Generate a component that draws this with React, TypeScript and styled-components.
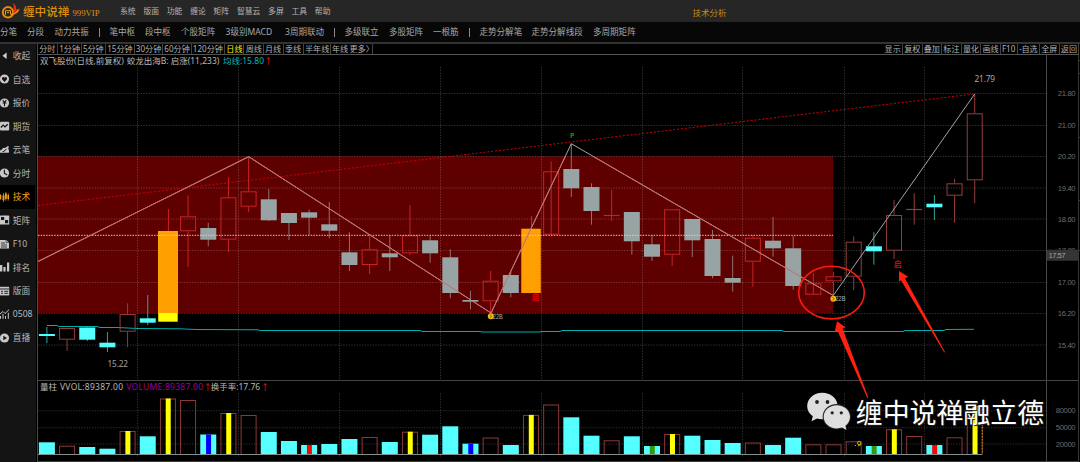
import React from "react";
import styled, { createGlobalStyle } from "styled-components";

const Global = createGlobalStyle`
  * { box-sizing: border-box; }
  body { margin: 0; background: #000; overflow: hidden; }
  svg { display: block; }
`;

const sans = `"Noto Sans", "Noto Sans CJK SC", sans-serif`;

const Page = styled.div`
  position: relative;
  display: flex;
  flex-direction: column;
  width: 1080px;
  height: 462px;
  background: #000;
  color: #b4b4b4;
  font-family: ${sans};
  font-size: 8.4px;
  white-space: nowrap;
  overflow: hidden;
`;

const TitleBar = styled.header`
  display: flex;
  align-items: center;
  height: 22px;
  flex: none;
  background: #262626;
`;

const Brand = styled.div`
  display: flex;
  align-items: center;
  width: 120px;
  color: #dc920e;
`;

const BrandName = styled.span`
  width: 49.5px;
  margin-left: 1px;
  font: 500 11.6px/20px "Noto Sans CJK SC", sans-serif;
`;

const BrandTier = styled.span`
  padding-top: 3px;
  font: 8.7px/18px "Liberation Serif", serif;
`;

const Menu = styled.nav`
  display: flex;
  gap: 7.7px;
  width: 572.5px;
  font-size: 7.85px;
  line-height: 22px;
`;

const PageName = styled.span`
  color: #c98a10;
  font-size: 8.5px;
  padding-top: 1px;
`;

const ToolBar = styled.div`
  display: flex;
  flex: none;
  height: 20px;
  background: #070707;
  font-size: 8.55px;
  line-height: 20px;
  color: #a8a8a8;
`;

const Tool = styled.span<{ $w: number }>`
  width: ${(p) => p.$w}px;
  flex: none;
`;

const ToolDivider = styled.i<{ $w: number }>`
  width: 1px;
  height: 9px;
  flex: none;
  margin: 6px ${(p) => p.$w - 1}px 0 0;
  background: #8a8a8a;
`;

const Main = styled.main`
  display: flex;
  flex: 1;
  min-height: 0;
  border-top: 2px solid #333;
`;

const SideBar = styled.aside`
  width: 36px;
  flex: none;
  background: #141414;
  display: flex;
  flex-direction: column;
`;

const SideItem = styled.div<{ $on?: boolean }>`
  display: flex;
  align-items: center;
  gap: 2.7px;
  height: 23.5px;
  width: 35px;
  flex: none;
  font-size: 8.7px;
  color: ${(p) => (p.$on ? "#f0a010" : "#b8b8b8")};
  background: ${(p) => (p.$on ? "#000" : "transparent")};
`;

const Content = styled.section`
  display: flex;
  flex-direction: column;
  width: 1042px;
  border-left: 1px solid #4a4a4a;
  margin-left: 1px;
`;

const TabRow = styled.div`
  display: flex;
  justify-content: space-between;
  height: 11px;
  flex: none;
  border-bottom: 1px solid #555;
  font-size: 8.1px;
  line-height: 10px;
`;

const TabGroup = styled.div`
  display: flex;
`;

const Tab = styled.span<{ $w: number; $on?: boolean; $bar?: boolean }>`
  width: ${(p) => p.$w}px;
  flex: none;
  padding-left: 1.2px;
  border-right: 1px solid ${(p) => (p.$bar === false ? "transparent" : "#444")};
  color: ${(p) => (p.$on ? "#f4f400" : "#b0b0b0")};
`;

const Body = styled.div`
  display: flex;
  flex: 1;
`;

const Plots = styled.div`
  width: 1009px;
  flex: none;
  border-right: 1px solid #484848;
`;

const Axis = styled.div`
  width: 33px;
  flex: none;
`;

const Legend = styled.div`
  display: flex;
  height: 12px;
  padding-left: 2px;
  line-height: 12px;
  font-size: 8.5px;
`;

const LegendPart = styled.span<{ $w?: number; $c?: string; $ls?: number }>`
  width: ${(p) => (p.$w ? p.$w + "px" : "auto")};
  color: ${(p) => p.$c || "#b8b8b8"};
  letter-spacing: ${(p) => p.$ls || 0}px;
`;

const VolumePane = styled.div`
  border-top: 1px solid #444;
`;

const Overlay = styled.svg`
  position: absolute;
  left: 0;
  top: 0;
`;

const Watermark = styled.div`
  position: absolute;
  left: 807px;
  top: 392px;
  display: flex;
  gap: 4.8px;
  color: #fff;
  font: 400 26.9px/40px "Noto Sans CJK SC", sans-serif;
  text-shadow: 1px 1px 1px #222;
`;

const tools: [string, number][] = [
  ["分笔", 27], ["分段", 27.5], ["动力共振", 44.5], ["", 10.5], ["笔中枢", 35.5], ["段中枢", 36],
  ["个股矩阵", 44.5], ["3级别MACD", 59.5], ["3周期联动", 49.2], ["", 10.3], ["多级联立", 44.5],
  ["多股矩阵", 44], ["一根筋", 36], ["", 10.5], ["走势分解笔", 52], ["走势分解线段", 61.5], ["多周期矩阵", 50],
];

const periods: [string, number][] = [
  ["分时", 20], ["1分钟", 23.7], ["5分钟", 24.3], ["15分钟", 28.7], ["30分钟", 28.5], ["60分钟", 28.5],
  ["120分钟", 33.5], ["日线", 19.3], ["周线", 19.3], ["月线", 20], ["季线", 20], ["半年线", 27],
  ["年线", 17.5], ["更多〉", 24.5],
];

const actions: [string, number][] = [
  ["显示", 19.6], ["复权", 19.6], ["叠加", 19.6], ["标注", 19.6], ["量化", 19.6], ["画线", 19.4],
  ["F10", 17], ["-自选", 22.3], ["全屏", 19.6], ["返回", 19.4],
];

type Kind = "r" | "c" | "g" | "o";
// kind, body top, body bottom, wick top, wick bottom
const candles: [Kind, number, number, number, number][] = [
  ["c", 334, 336, 327, 343], ["r", 328, 339.7, 328, 351], ["c", 327.5, 339.7, 327.5, 341],
  ["c", 342.7, 347.3, 332, 352], ["r", 314, 331.7, 303.3, 347], ["c", 318.3, 322.7, 295, 325],
  ["o", 231, 321.7, 209, 231], ["r", 216.3, 231.3, 195.3, 267], ["g", 228, 239.7, 223, 246.3],
  ["r", 197.3, 239.7, 177.3, 252], ["r", 191.3, 206.7, 156.7, 212], ["g", 199.3, 220.3, 189, 221],
  ["g", 213, 223, 213, 240], ["g", 212.3, 217.7, 209.7, 235], ["g", 224.3, 230.7, 202, 238.3],
  ["g", 252.3, 265, 232.3, 271], ["r", 249.3, 265, 235, 274], ["g", 253.3, 257.3, 235, 271],
  ["r", 235.3, 253.3, 205, 255], ["g", 240.3, 253.3, 235.7, 262.7], ["g", 257.3, 293, 249.3, 298.3],
  ["g", 300, 301.7, 290.7, 309.3], ["r", 280.7, 301.3, 271, 312.7], ["g", 275, 293, 271.7, 297.3],
  ["o", 228.7, 293, 216, 229], ["r", 171.3, 234.7, 161.3, 171.3], ["g", 169, 188.3, 143.7, 197],
  ["g", 187, 211, 183.3, 224.7], ["r", 215, 216, 189.7, 221], ["g", 212, 241.3, 212, 254.7],
  ["g", 244.3, 256.7, 235, 261], ["r", 209.3, 254.7, 209.3, 265.7], ["g", 219, 240.3, 219, 257],
  ["g", 239, 276, 230, 278.3], ["g", 278, 282.7, 255.7, 291.7], ["r", 237.7, 261.7, 235.3, 286.7],
  ["g", 240.7, 248.3, 217, 256.7], ["g", 248.3, 286, 236, 289.7], ["r", 283.3, 294.7, 273, 283.3],
  ["r", 276.3, 281.3, 272.3, 295], ["r", 241.7, 276.7, 236.3, 290], ["c", 246.3, 251.3, 232.3, 264.7],
  ["r", 215, 250.7, 200, 259], ["r", 209, 210, 193.3, 224.7], ["c", 203.7, 207.3, 195, 220],
  ["r", 183.3, 195.7, 178.7, 222.7], ["r", 113.3, 180.3, 93.7, 203.3],
];

// outline or solid, bar top, stripe colour
const volumes: [("r" | "c"), number, string?][] = [
  ["c", 442.3], ["r", 445.7], ["c", 447], ["c", 448.7], ["r", 431, "#ff0"], ["c", 436.3],
  ["r", 398.5, "#ff0"], ["r", 400], ["c", 434.5, "#00f"], ["r", 413, "#ff0"], ["r", 415],
  ["c", 432], ["c", 441], ["c", 445, "#f00"], ["c", 444], ["c", 439], ["r", 437], ["c", 442],
  ["r", 431.7, "#ff0"], ["c", 434.7], ["c", 426.3], ["c", 443.7, "#00f"], ["r", 437.5], ["c", 445],
  ["r", 414.9, "#ff0"], ["r", 404.5], ["c", 417.3], ["c", 435.7], ["r", 440.3], ["c", 436.3],
  ["c", 446, "#2f9a10"], ["r", 434, "#ff0"], ["c", 435.7], ["c", 440], ["c", 443], ["r", 442.5],
  ["c", 445], ["c", 437.7], ["r", 444.3], ["r", 444.3], ["r", 441.3], ["c", 446, "#2f9a10"],
  ["r", 429.3, "#ff0"], ["r", 436], ["c", 445, "#f00"], ["r", 437.3], ["r", 406, "#ff0"],
];

const slotX = (i: number) => 46.9 + i * 20.17;
const gridX = [137.5, 238.5, 339.5, 440.5, 541.5, 642.5, 742.5, 844.5, 924.5];
const gridY = [93.5, 125.5, 156.5, 188, 219, 250.5, 282.5, 313.5, 345];
const priceTicks = ["21.80", "21.00", "20.20", "19.40", "18.60", "17.80", "17.00", "16.20", "15.40"];
const volTicks: [string, number][] = [["80000", 410.7], ["50000", 427.7], ["20000", 444]];
const trend = "38,261.5 248.7,156.7 491,313 571.3,143.7 833.3,295.5 974.7,94";

const Candle = ({ d, i }: { d: (typeof candles)[number]; i: number }) => {
  const [k, top, bottom, high, low] = d;
  const x = slotX(i);
  const inRange = i > 6 && i < 40;
  const red = inRange ? "#c42424" : "#963c3c";
  if (k === "o")
    return (
      <g>
        <line x1={x + 0.5} x2={x + 0.5} y1={high} y2={low} stroke="#d02020" />
        <rect x={x - 9.7} y={top} width={19.5} height={bottom - top} fill={bottom > 313 ? "#ff0" : "#ffa000"} />
        {bottom > 313 && <rect x={x - 9.7} y={top} width={19.5} height={313 - top} fill="#ffa000" />}
      </g>
    );
  if (k === "r")
    return (
      <g stroke={red} fill="none">
        <line x1={x} x2={x} y1={high} y2={top} />
        <line x1={x} x2={x} y1={bottom} y2={low} />
        {bottom - top < 2 ? (
          <line x1={x - 8} x2={x + 8} y1={top + 0.5} y2={top + 0.5} strokeWidth={1.2} />
        ) : (
          <rect x={x - 7.5} y={top + 0.5} width={15} height={bottom - top - 1} />
        )}
      </g>
    );
  const c = k === "c" ? "#55ffff" : "#98a3a3";
  return (
    <g>
      <line x1={x} x2={x} y1={high} y2={low} stroke={k === "c" ? "#2ca3a3" : "#8b7272"} />
      <rect x={x - 8} y={top} width={16} height={bottom - top} fill={c} />
    </g>
  );
};

const Signal = ({ x, y }: { x: number; y: number }) => (
  <g>
    <text x={x + 2} y={y + 2.6} fontSize="7" fontFamily="Liberation Sans" textLength="10" lengthAdjust="spacingAndGlyphs" fill="#b0b0b0">22B</text>
    <circle cx={x} cy={y} r={3} fill="#f5b90c" />
    <path d={`M${x - 1} ${y - 1.5}l1.8 1.2l-1.2 2`} stroke="#9b4a08" strokeWidth=".9" fill="none" />
  </g>
);

const PricePlot = () => (
  <svg width="1008" height="313" viewBox="38 67 1008 313">
    <defs>
      <clipPath id="zone"><rect x="38" y="156.3" width="795.3" height="157" /></clipPath>
    </defs>
    <rect x="38" y="156.3" width="795.3" height="156.7" fill="#5f0000" />
    <g stroke="#fff" strokeOpacity=".19" strokeDasharray="1.4 1.3">
      {gridX.map((x) => <line key={x} x1={x} x2={x} y1="67" y2="380" />)}
      {gridY.map((y) => <line key={y} x1="38" x2="1046" y1={y} y2={y} />)}
    </g>
    <path d="M38 205.5L974 94" stroke="#c40000" strokeDasharray="2.2 1.7" />
    <path d="M47 325.5L57 325.5L59 326.5L97 326.5L100 327.5L118 327.5L137 328.5L180 328.8L196 329.5L258 329.8L260 330.5L420 330.5L422 331.5L480 331.5L482 332L540 332L541 331.5L560 331.5L562 330.5L782 330.5L784 331.5L903 331.5L905 330.5L944 330.5L946 329.5L974 329.3" stroke="#00acac" fill="none" />
    {candles.map((d, i) => <Candle key={i} d={d} i={i} />)}
    <path d="M38 235.3H833" stroke="#e8d0c8" strokeOpacity=".75" strokeWidth="1.2" strokeDasharray="1.5 1.2" />
    <polyline points={trend} fill="none" stroke="#a4a4a4" />
    <polyline points={trend} fill="none" stroke="#c46c6c" clipPath="url(#zone)" />
    <g fontFamily="Noto Sans, Noto Sans CJK SC, sans-serif">
      <text x="107.5" y="367" fontSize="8.2" textLength="20.5" fill="#a0a0a0">15.22</text>
      <text x="974.5" y="82" fontSize="8.2" textLength="20.5" fill="#a8a8a8">21.79</text>
      <text x="570" y="138" fontSize="7.2" fontWeight="700" fill="#009a10">P</text>
      <text x="893.8" y="266.6" fontSize="7.8" fontWeight="700" fill="#e00000">启</text>
      <text x="531.8" y="300" fontSize="7.6" fontWeight="700" fill="#e80000">启</text>
    </g>
    <Signal x={490.8} y={316.3} />
    <Signal x={833.4} y={298.7} />
  </svg>
);

const VolumePlot = () => (
  <svg width="1008" height="69" viewBox="38 393 1008 69">
    <g stroke="#fff" strokeOpacity=".17" strokeDasharray="1.4 1.3">
      {gridX.map((x) => <line key={x} x1={x} x2={x} y1="393" y2="458" />)}
      {volTicks.map(([, y]) => <line key={y} x1="38" x2="1046" y1={y} y2={y} />)}
    </g>
    {volumes.map(([k, top, stripe], i) => {
      const x = slotX(i);
      return (
        <g key={i}>
          {k === "c" ? (
            <rect x={x - 8} y={top} width={16} height={454 - top} fill="#55ffff" />
          ) : (
            <rect x={x - 7.5} y={top + 0.5} width={15} height={454 - top} fill="none" stroke="#8c3838" />
          )}
          {stripe && <rect x={x - 2.2} y={top} width={5} height={454 - top} fill={stripe} />}
        </g>
      );
    })}
    <path d="M38 454.5H982" stroke="#829090" />
    <path d="M982.3 406V454" stroke="#c89000" strokeDasharray="1.5 1.5" />
    <circle cx="859.2" cy="443" r="1.7" fill="none" stroke="#c8b800" />
    <path d="M855 445.5h1M858 446l3-1.5" stroke="#c8b800" />
    <path d="M38 461.5H1046" stroke="#3c3c3c" />
  </svg>
);

const AxisLabels = () => (
  <svg width="33" height="407" viewBox="1047 55 33 407">
    <g fontFamily="Liberation Sans" fontSize="7.7" fill="#6c6c6c" textAnchor="end">
      {priceTicks.map((t, i) => <text key={t} x="1075.6" y={gridY[i] + 2.7} textLength="17.8">{t}</text>)}
      {volTicks.map(([t, y]) => <text key={t} x="1075.6" y={y + 2.6} textLength="19.8">{t}</text>)}
    </g>
    <path d="M1047 380.5H1078M1047 461.5H1078" stroke="#444" />
    <path d="M1078.5 55V462M1079 60.5h1M1079 73.5h1M1079 137.5h1M1079 200.5h1M1079 250.5h1" stroke="#363636" />
    <rect x="1047" y="249.7" width="31.5" height="11" fill="#353535" />
    <text x="1048.5" y="257.9" fontFamily="Liberation Sans" fontSize="7.7" textLength="17" fill="#a0a0a0">17.57</text>
  </svg>
);

const sideLabels = ["收起", "自选", "报价", "期货", "云笔", "分时", "技术", "矩阵", "F10", "排名", "版面", "0508", "直播"];

const sideShapes: React.ReactNode[] = [
  <path d="M6.6 2.6V9L2.5 5.8z" fill="#d0d0d0" />,
  <g><circle cx="4.5" cy="6" r="4.6" fill="#c8c8c8" /><path d="M4.5 9L2 6.3Q1.6 4 3.3 4Q4.2 4 4.5 4.7Q5 4 5.9 4Q7.4 4.2 7 6.3z" fill="#141414" /></g>,
  <g><circle cx="4.5" cy="6" r="4.6" fill="#c8c8c8" /><path d="M2.8 3.2L4.5 5.5L6.3 3.2M2.6 6h3.8M4.5 5.5V9.2" stroke="#141414" strokeWidth="1.1" fill="none" /></g>,
  <g><rect x="0" y="1.7" width="9.2" height="8.8" rx="1" fill="#c8c8c8" /><path d="M.8 7.5L3.2 5L5 6.8L7.8 4.2" stroke="#141414" strokeWidth="1.2" fill="none" /></g>,
  <g><path d="M0 8.7Q-.5 5.7 2 5.5Q3 3 5 4L8 2Q9.6 2.6 8 4.5Q9.5 6.2 8.8 8.7z" fill="#c8c8c8" /><path d="M2.5 7.8Q5 7.5 6.5 4.7" stroke="#141414" fill="none" /></g>,
  <g><circle cx="4.5" cy="6" r="4.6" fill="#c8c8c8" /><path d="M4.4 2.8V6.2L7.2 8" stroke="#141414" strokeWidth="1.2" fill="none" /></g>,
  <g fill="#f0a010"><path d="M0 3.6h1.3v5H0zM2.5 4.2h2v5h-2zM5 2.5h1.8v5.3H5zM7.5 4h1.6v4H7.5z" /><path d="M3.5 2v9M5.9 1v8.7M8.3 2.5v7" stroke="#f0a010" strokeWidth=".7" /></g>,
  <g><rect x="0" y="1.6" width="9.2" height="9" rx=".6" fill="#c8c8c8" /><path d="M1 3h3.2v3H1zM5 6h3.2v3.3H5z" fill="#141414" /></g>,
  <g><path d="M0 2h6.2L9 4.4V10.6H0z" fill="#c8c8c8" /><path d="M1 5h4M1 7h6M1 9h6" stroke="#141414" strokeWidth=".8" /><path d="M6 2V4.6H9" stroke="#141414" strokeWidth=".6" fill="none" /></g>,
  <path d="M0 4h2.3v6.5H0zM3.4 6h2.2v4.5H3.4zM7 1.6h2.2v8.9H7z" fill="#c8c8c8" />,
  <g><rect x="0" y="1.8" width="9.2" height="8.6" fill="#c8c8c8" /><path d="M0 4h9M1 6.3h2M1 8.3h2M4.2 6.3h4M4.2 8.3h4" stroke="#141414" strokeWidth=".9" /></g>,
  <g stroke="#c8c8c8" fill="none" strokeWidth="1"><path d="M0 6L3 3.5L5 5.5L9 1.6M.5 8v2.8M3 6v4.8M5.5 8v2.8M8.3 4.8v6" /></g>,
  <g><circle cx="4.5" cy="6" r="4.6" fill="#c8c8c8" /><path d="M3.3 3.8L7 6L3.3 8.3z" fill="#141414" /></g>,
];

export default function App() {
  return (
    <Page>
      <Global />
      <TitleBar>
        <Brand>
          <svg width="22" height="22" viewBox="0 0 22 22">
            <circle cx="8" cy="12.3" r="5.2" fill="none" stroke="#e88a08" strokeWidth="2" />
            <path d="M5.5 14.5V10.7H10.5V14.5M7 12.7h2" stroke="#f0a020" fill="none" />
            <path d="M13 3Q17 6 16 9.5L20 8.5Q18 14 12.5 15Q15 10 13 3z" fill="#d83218" />
            <path d="M11 14.5Q16 14 18.5 10" stroke="#f29a14" fill="none" strokeWidth="1.3" />
          </svg>
          <BrandName>缠中说禅</BrandName>
          <BrandTier>999VIP</BrandTier>
        </Brand>
        <Menu>
          {["系统", "版面", "功能", "缠论", "矩阵", "智慧云", "多屏", "工具", "帮助"].map((m) => <span key={m}>{m}</span>)}
        </Menu>
        <PageName>技术分析</PageName>
      </TitleBar>
      <ToolBar>
        {tools.map(([t, w], i) => (t ? <Tool key={i} $w={w}>{t}</Tool> : <ToolDivider key={i} $w={w} />))}
      </ToolBar>
      <Main>
        <SideBar>
          {sideLabels.map((t, i) => (
            <SideItem key={t} $on={t === "技术"}>
              <svg width="10" height="12" viewBox="0 0 10 12">{sideShapes[i]}</svg>
              {t}
            </SideItem>
          ))}
        </SideBar>
        <Content>
          <TabRow>
            <TabGroup>
              {periods.map(([t, w]) => <Tab key={t} $w={w} $on={t === "日线"} $bar={t !== "年线"}>{t}</Tab>)}
            </TabGroup>
            <TabGroup>
              {actions.map(([t, w]) => <Tab key={t} $w={w}>{t}</Tab>)}
            </TabGroup>
          </TabRow>
          <Body>
            <Plots>
              <Legend>
                <LegendPart $w={86.7}>双飞股份(日线,前复权)</LegendPart>
                <LegendPart $w={96.3}>蛟龙出海B: 启涨(11,233)</LegendPart>
                <LegendPart $w={41} $c="#00b8b8">均线:15.80</LegendPart>
                <LegendPart $c="#e02010">↑</LegendPart>
              </Legend>
              <PricePlot />
              <VolumePane>
                <Legend>
                  <LegendPart $w={20}>量柱</LegendPart>
                  <LegendPart $w={66.3} $ls={0.27}>VVOL:89387.00</LegendPart>
                  <LegendPart $w={77.2} $ls={0.25} $c="#9c009c">VOLUME:89387.00</LegendPart>
                  <LegendPart $w={7.2} $c="#e02010">↑</LegendPart>
                  <LegendPart $w={50}>换手率:17.76</LegendPart>
                  <LegendPart $c="#e02010">↑</LegendPart>
                </Legend>
                <VolumePlot />
              </VolumePane>
            </Plots>
            <Axis><AxisLabels /></Axis>
          </Body>
        </Content>
      </Main>
      <Overlay width="1080" height="462" viewBox="0 0 1080 462">
        <ellipse cx="831.5" cy="292.6" rx="32.8" ry="26.3" fill="none" stroke="#f81c10" strokeWidth="1.6" />
        <path d="M837 321.3L845.5 327.3L842.5 328.6L868.3 397.6L867.3 398L837.5 330.7L834.7 332z" fill="#ff2010" />
        <path d="M899 271L908.2 276.8L905 278.5L945 352L944.2 352.5L901 280.2L899 281.5z" fill="#ff2010" />
      </Overlay>
      <Watermark>
        <svg width="44" height="38" viewBox="807 392 44 38">
          <path d="M822.3 392.8C813.5 392.8 807.2 399 807.2 406.2C807.2 410.5 809.5 413.8 812.8 416.2L811.5 421.3L817 418.6Q820 419.6 824 419.2Q822 409 832 405.5Q835 404.4 837.6 405C836.8 398 830.5 392.8 822.3 392.8z" fill="#dedede" />
          <ellipse cx="836.8" cy="416.8" rx="14.2" ry="12.8" fill="#222" />
          <path d="M836.8 405.2C829.5 405.2 823.7 410.3 823.7 416.7C823.7 423.4 829.6 428.4 836.8 428.4Q839.6 428.4 842 427.6L846.5 430L845.4 425.7C848.3 423.5 850 420.3 850 416.7C850 410.3 844 405.2 836.8 405.2z" fill="#dedede" />
          <g fill="#222"><circle cx="817" cy="402" r="1.9" /><circle cx="827.5" cy="402" r="1.9" /><circle cx="832.2" cy="412.8" r="1.6" /><circle cx="841.3" cy="412.8" r="1.6" /></g>
        </svg>
        <span>缠中说禅融立德</span>
      </Watermark>
    </Page>
  );
}
